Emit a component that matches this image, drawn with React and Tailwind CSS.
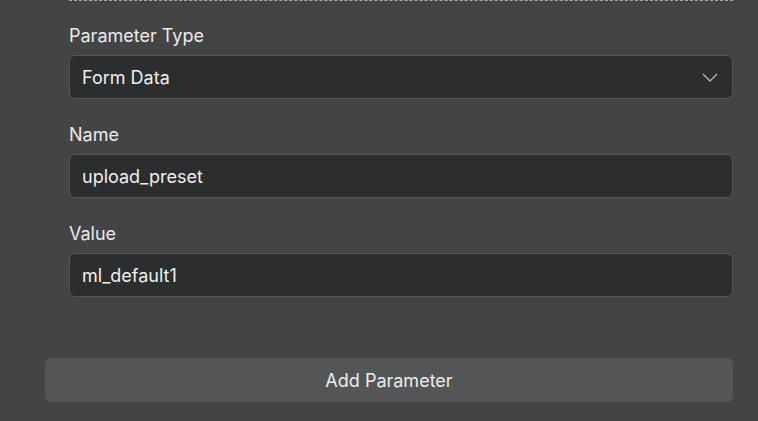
import React from 'react';

const Field = ({ label, children }) => (
  <div className="flex flex-col">
    <label className="text-[18px] leading-6 mb-[7px] text-[#ebebeb]">{label}</label>
    {children}
  </div>
);

const TextInput = ({ value }) => (
  <input
    readOnly
    value={value}
    className="h-[44px] w-full rounded-md border border-[#55575a] bg-[#2c2d2e] px-3 text-[18px] text-[#f0f0f0] outline-none"
  />
);

export default function App() {
  return (
    <div
      className="min-h-[421px] w-full bg-[#434446] pl-[45px] pr-[25px] pb-[20px]"
      style={{ fontFamily: 'Inter, "Noto Sans", sans-serif' }}
    >
      <div className="ml-[24px] border-t border-dashed border-[#a9aaac] pt-[23px] flex flex-col gap-6">
        <Field label="Parameter Type">
          <div className="flex h-[44px] items-center justify-between rounded-md border border-[#55575a] bg-[#2c2d2e] pl-3 pr-[14px] text-[18px] text-[#f0f0f0]">
            <span>Form Data</span>
            <svg width="16" height="9" viewBox="0 0 16 9" fill="none">
              <polyline points="1,1 8,8 15,1" stroke="#b4b5b8" strokeWidth="1.4" />
            </svg>
          </div>
        </Field>
        <Field label="Name">
          <TextInput value="upload_preset" />
        </Field>
        <Field label="Value">
          <TextInput value="ml_default1" />
        </Field>
      </div>
      <button className="mt-[61px] flex h-[44px] w-full items-center justify-center rounded-md bg-[#545557] text-[18px] text-[#ececec]">
        Add Parameter
      </button>
    </div>
  );
}
